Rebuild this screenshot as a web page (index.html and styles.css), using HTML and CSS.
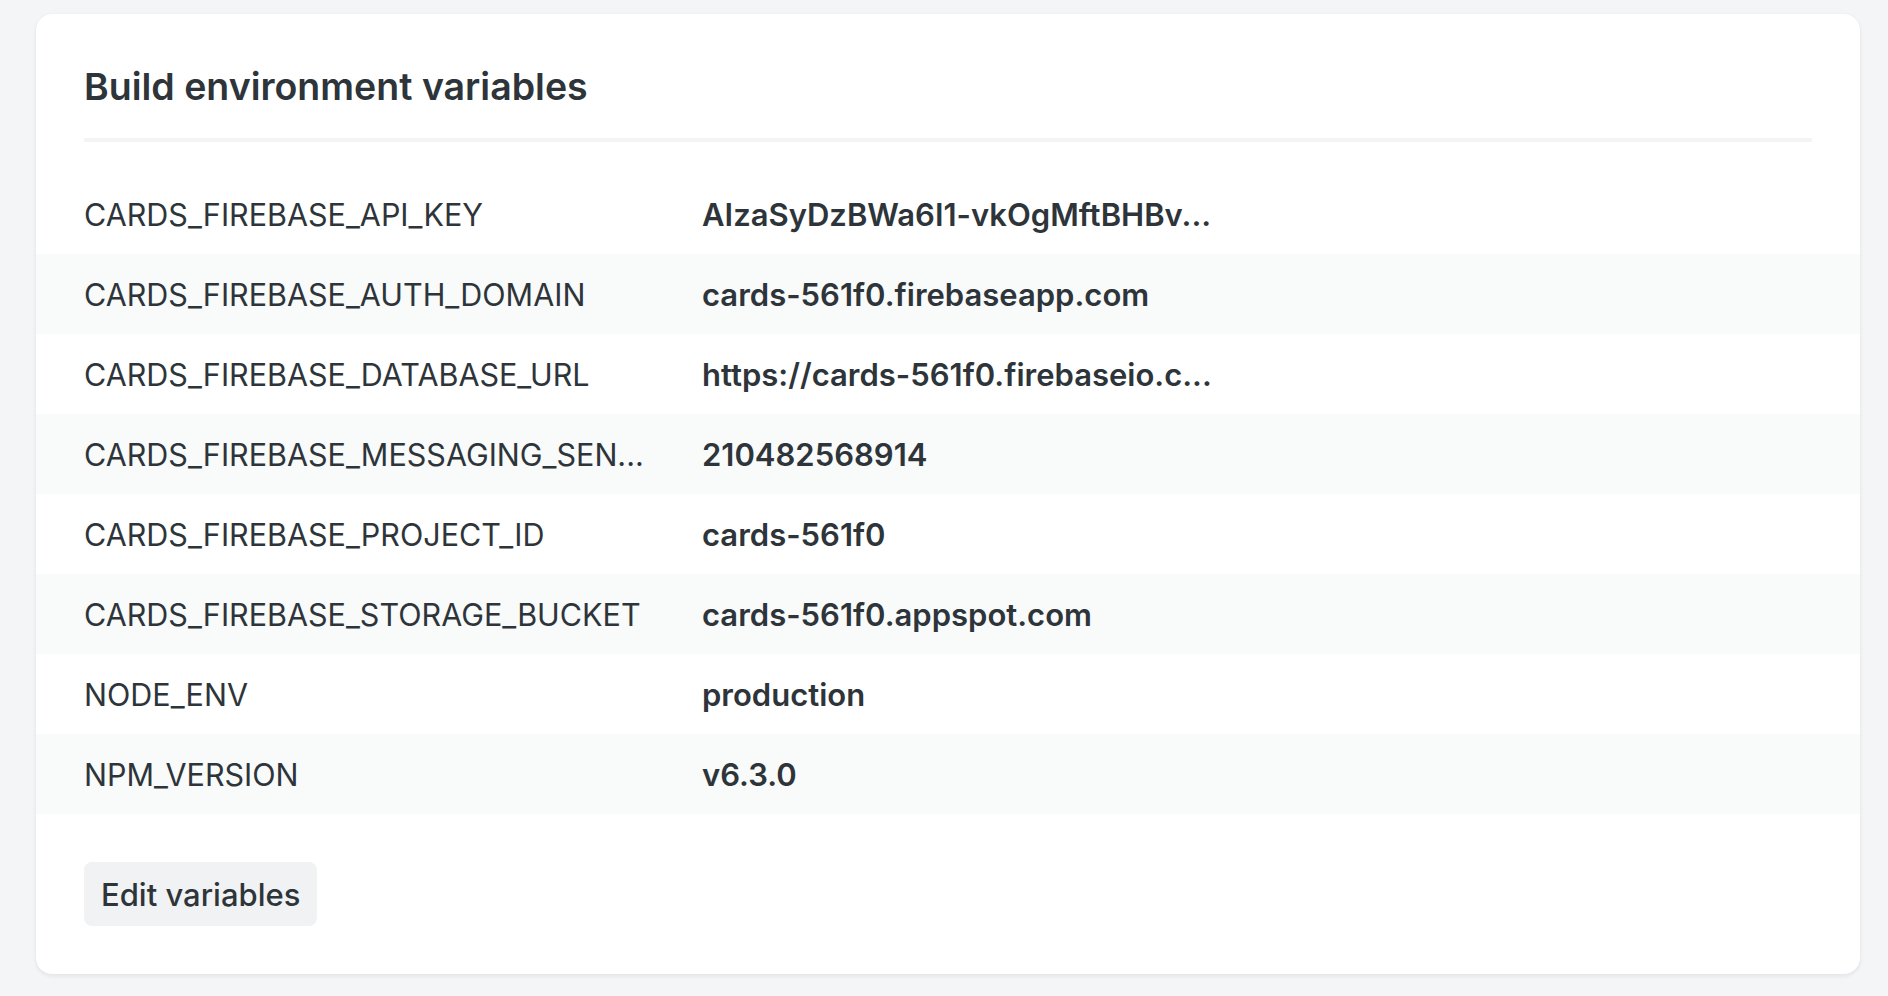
FILE: index.html
```html
<!DOCTYPE html>
<html lang="en">
<head>
<meta charset="utf-8">
<title>Build environment variables</title>
<link rel="stylesheet" href="styles.css">
</head>
<body>
<main class="page">
  <section class="card">
    <h2 class="card-title">Build environment variables</h2>
    <dl class="env-list">
      <div class="env-row"><dt class="env-key">CARDS_FIREBASE_API_KEY</dt><dd class="env-value">AIzaSyDzBWa6I1-vkOgMftBHBv...</dd></div>
      <div class="env-row"><dt class="env-key">CARDS_FIREBASE_AUTH_DOMAIN</dt><dd class="env-value">cards-561f0.firebaseapp.com</dd></div>
      <div class="env-row"><dt class="env-key">CARDS_FIREBASE_DATABASE_URL</dt><dd class="env-value">https://cards-561f0.firebaseio.c...</dd></div>
      <div class="env-row"><dt class="env-key">CARDS_FIREBASE_MESSAGING_SEN...</dt><dd class="env-value">210482568914</dd></div>
      <div class="env-row"><dt class="env-key">CARDS_FIREBASE_PROJECT_ID</dt><dd class="env-value">cards-561f0</dd></div>
      <div class="env-row"><dt class="env-key">CARDS_FIREBASE_STORAGE_BUCKET</dt><dd class="env-value">cards-561f0.appspot.com</dd></div>
      <div class="env-row"><dt class="env-key">NODE_ENV</dt><dd class="env-value">production</dd></div>
      <div class="env-row"><dt class="env-key">NPM_VERSION</dt><dd class="env-value">v6.3.0</dd></div>
    </dl>
    <div class="card-actions">
      <button class="btn" type="button">Edit variables</button>
    </div>
  </section>
</main>
</body>
</html>
```
FILE: styles.css
```css
* { box-sizing: border-box; }
html, body { margin: 0; padding: 0; }
body {
  background: #f4f5f7;
  font-family: Inter, "Noto Sans", "Liberation Sans", sans-serif;
  color: #2e353a;
}
.page {
  padding: 14px 28px 22px 36px;
}
.card {
  background: #ffffff;
  border-radius: 16px;
  box-shadow: 0 2px 4px rgba(14, 30, 37, 0.08), 0 0 1px rgba(14, 30, 37, 0.06);
  padding: 48px 0;
}
.card-title {
  margin: 0 48px;
  font-size: 37.5px;
  font-weight: 600;
  line-height: 50px;
  padding-bottom: 26px;
  border-bottom: 4px solid #f3f4f5;
}
.env-list {
  margin: 32px 0 48px;
  padding: 0;
}
.env-row {
  display: flex;
  align-items: center;
  height: 80px;
  padding: 0 48px;
}
.env-row:nth-child(even) { background: #f9fafa; }
.env-key, .env-value {
  margin: 0;
  white-space: nowrap;
  overflow: hidden;
  text-overflow: ellipsis;
}
.env-key {
  flex: 0 0 618px;
  padding-right: 48px;
  font-size: 30.5px;
  font-weight: 400;
}
.env-value {
  max-width: 560px;
  font-size: 31px;
  font-weight: 600;
}
.card-actions {
  padding: 0 48px;
}
.btn {
  font-family: inherit;
  font-size: 31px;
  font-weight: 500;
  color: #2e353a;
  background: #f0f2f3;
  border: 0;
  border-radius: 8px;
  height: 64px;
  padding: 0 17px;
  cursor: pointer;
}
```
